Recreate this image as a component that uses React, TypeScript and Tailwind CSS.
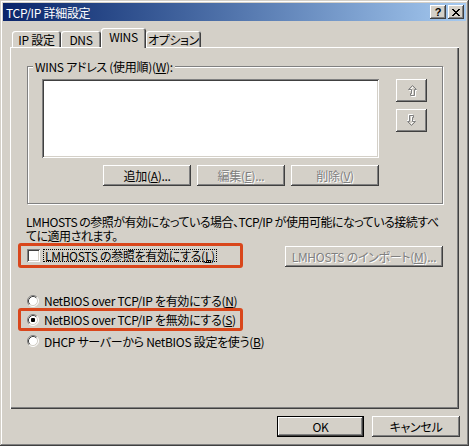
import React from "react";

const raised =
  "shadow-[inset_-1px_-1px_#404040,inset_1px_1px_#ffffff,inset_-2px_-2px_#808080,inset_2px_2px_#d4d0c8]";
const sunken =
  "shadow-[inset_1px_1px_#808080,inset_-1px_-1px_#ffffff,inset_2px_2px_#404040,inset_-2px_-2px_#d4d0c8]";
const disabled = "text-[#808080] [text-shadow:1px_1px_0_#ffffff]";

const Btn = ({
  children,
  w,
  off,
  def,
}: {
  children: React.ReactNode;
  w: string;
  off?: boolean;
  def?: boolean;
}) => (
  <div
    className={`${w} ${def ? "border border-black" : ""} flex items-center justify-center h-[21px]`}
  >
    <div className={`w-full h-full flex items-center justify-center whitespace-nowrap bg-[#d4d0c8] ${raised} ${off ? disabled : ""}`}>
      {children}
    </div>
  </div>
);

const Radio = ({ on }: { on?: boolean }) => (
  <svg width="12" height="12" viewBox="0 0 12 12" className="shrink-0">
    <circle cx="6" cy="6" r="5" fill="#ffffff" />
    <path d="M2.11 9.89 A5.5 5.5 0 0 1 9.89 2.11" fill="none" stroke="#808080" />
    <path d="M9.89 2.11 A5.5 5.5 0 0 1 2.11 9.89" fill="none" stroke="#ffffff" />
    <path d="M2.82 9.18 A4.5 4.5 0 0 1 9.18 2.82" fill="none" stroke="#404040" />
    <path d="M9.18 2.82 A4.5 4.5 0 0 1 2.82 9.18" fill="none" stroke="#d4d0c8" />
    {on && <rect x="4" y="4" width="4" height="4" rx="1" fill="#000000" />}
  </svg>
);

const Arrow = ({ down }: { down?: boolean }) => (
  <svg width="10" height="13" viewBox="0 0 10 13" className={down ? "rotate-180" : ""}>
    <path d="M5.5 1.5 L9.5 5.5 L7.5 5.5 L7.5 11.5 L3.5 11.5 L3.5 9.5 L4.5 9.5 L4.5 5.5 L1.5 5.5 Z" fill="none" stroke="#ffffff" transform="translate(1 1)" />
    <path d="M5.5 1.5 L9.5 5.5 L7.5 5.5 L7.5 11.5 L3.5 11.5 L3.5 9.5 L4.5 9.5 L4.5 5.5 L1.5 5.5 Z" fill="none" stroke="#808080" />
  </svg>
);

const Tab = ({ label, w, on }: { label: string; w: string; on?: boolean }) => (
  <div
    className={`${w} ${
      on ? "h-[20px] -mb-[1px] relative z-10 pb-[4px]" : "h-[16px]"
    } flex items-center justify-center whitespace-nowrap bg-[#d4d0c8] rounded-t-[3px] shadow-[inset_1px_1px_#ffffff,inset_-1px_0_#404040,inset_-2px_0_#808080]`}
  >
    {label}
  </div>
);

export default function App() {
  return (
    <div className="w-[469px] h-[446px] bg-[#d4d0c8] flex flex-col px-[3px] pt-[3px] overflow-hidden text-black text-[12px] leading-[13px] tracking-[-0.3px] font-['Noto_Sans_CJK_JP',sans-serif] [font-feature-settings:'palt'] shadow-[inset_-1px_-1px_#404040,inset_1px_1px_#d4d0c8,inset_-2px_-2px_#808080,inset_2px_2px_#ffffff]">
      {/* title bar */}
      <div className="h-[18px] flex items-center justify-between pl-[3px] pr-[2px] bg-gradient-to-r from-[#0a246a] to-[#a6caf0] text-white">
        <span>TCP/IP 詳細設定</span>
        <div className="flex gap-[2px]">
          <div className={`w-[16px] h-[14px] bg-[#d4d0c8] ${raised} flex items-center justify-center text-black font-bold text-[11px] font-['Liberation_Sans',sans-serif]`}>
            ?
          </div>
          <div className={`w-[16px] h-[14px] bg-[#d4d0c8] ${raised} flex items-center justify-center`}>
            <svg width="8" height="7" viewBox="0 0 8 7">
              <path d="M0 0 L7 7 M1 0 L8 7 M7 0 L0 7 M8 0 L1 7" stroke="#000000" strokeWidth="1" />
            </svg>
          </div>
        </div>
      </div>

      {/* tabs */}
      <div className="mt-[7px] ml-[9px] h-[19px] flex items-end">
        <Tab label="IP 設定" w="w-[49px]" />
        <Tab label="DNS" w="w-[40px]" />
        <Tab label="WINS" w="w-[45px]" on />
        <Tab label="オプション" w="w-[55px]" />
      </div>

      {/* panel */}
      <div className="ml-[7px] w-[449px] h-[362px] flex flex-col shadow-[inset_1px_1px_#ffffff,inset_-1px_-1px_#404040,inset_-2px_-2px_#808080]">
        <div className="relative mt-[19px] ml-[17px] w-[416px] h-[138px] border border-[#808080] shadow-[inset_1px_1px_#ffffff,1px_1px_#ffffff] pl-[14px] pt-[12px]">
          <span className="absolute left-[5px] -top-[7px] px-[2px] bg-[#d4d0c8] whitespace-nowrap">
            WINS アドレス (使用順)(<u>W</u>):
          </span>
          <div className="flex gap-[17px]">
            <div className={`w-[337px] h-[79px] bg-white ${sunken}`} />
            <div className="flex flex-col gap-[7px]">
              <div className={`w-[31px] h-[23px] flex items-center justify-center ${raised}`}>
                <Arrow />
              </div>
              <div className={`w-[31px] h-[23px] flex items-center justify-center ${raised}`}>
                <Arrow down />
              </div>
            </div>
          </div>
          <div className="mt-[7px] ml-[61px] flex gap-[6px]">
            <Btn w="w-[88px]">
              追加(<u>A</u>)...
            </Btn>
            <Btn w="w-[88px]" off>
              編集(<u>E</u>)...
            </Btn>
            <Btn w="w-[88px]" off>
              削除(<u>V</u>)
            </Btn>
          </div>
        </div>

        <div className="mt-[11px] ml-[16px] flex flex-col whitespace-nowrap leading-[14px] tracking-[-0.5px]">
          <span>LMHOSTS の参照が有効になっている場合、TCP/IP が使用可能になっている接続すべ</span>
          <span>てに適用されます。</span>
        </div>

        <div className="ml-[8px] w-[425px] flex items-center justify-between">
          <div className="w-[225px] h-[25px] border-[3px] border-[#d9461b] rounded-[3px] flex items-center pl-[6px] gap-[3px] whitespace-nowrap">
            <div className={`w-[13px] h-[13px] bg-white shrink-0 ${sunken}`} />
            <span className="border border-dotted border-black px-[1px] leading-[11px]">
              LMHOSTS の参照を有効にする(<u>L</u>)
            </span>
          </div>
          <div className="w-[158px] h-[19px]">
            <Btn w="w-[158px]" off>
              LMHOSTS のインポート(<u>M</u>)...
            </Btn>
          </div>
        </div>

        <div className="mt-[23px] ml-[8px] flex flex-col whitespace-nowrap">
          <div className="h-[17px] pt-[2px] flex items-center pl-[9px] gap-[5px]">
            <Radio />
            <span>NetBIOS over TCP/IP を有効にする(<u>N</u>)</span>
          </div>
          <div className="w-[225px] h-[23px] border-[3px] border-[#d9461b] rounded-[3px] flex items-center pl-[6px] gap-[5px]">
            <Radio on />
            <span>NetBIOS over TCP/IP を無効にする(<u>S</u>)</span>
          </div>
          <div className="h-[20px] flex items-center pl-[9px] gap-[5px]">
            <Radio />
            <span>DHCP サーバーから NetBIOS 設定を使う(<u>B</u>)</span>
          </div>
        </div>
      </div>

      {/* bottom buttons */}
      <div className="mt-[7px] mr-[6px] flex justify-end gap-[8px]">
        <Btn w="w-[87px]" def>
          OK
        </Btn>
        <Btn w="w-[88px]">キャンセル</Btn>
      </div>
    </div>
  );
}
